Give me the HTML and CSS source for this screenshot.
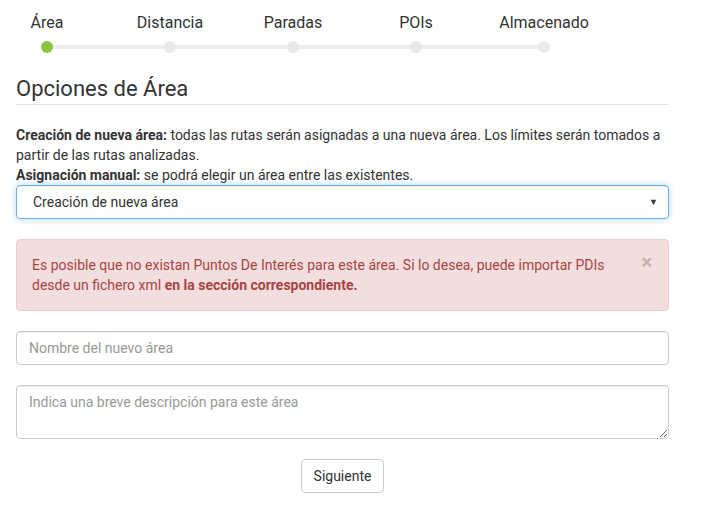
FILE: index.html
```html
<!DOCTYPE html>
<html lang="es">
<head>
<meta charset="utf-8">
<link rel="stylesheet" href="styles.css">
</head>
<body>
<div class="page">
  <div class="stepper">
    <div class="step active"><span class="step-label">Área</span><span class="dot"></span></div>
    <div class="step"><span class="step-label">Distancia</span><span class="dot"></span></div>
    <div class="step"><span class="step-label">Paradas</span><span class="dot"></span></div>
    <div class="step"><span class="step-label">POIs</span><span class="dot"></span></div>
    <div class="step last"><span class="step-label">Almacenado</span><span class="dot ring"></span></div>
  </div>

  <h2 class="title">Opciones de Área</h2>

  <p class="info"><strong>Creación de nueva área:</strong> todas las rutas serán asignadas a una nueva área. Los límites serán tomados a partir de las rutas analizadas.<br><strong>Asignación manual:</strong> se podrá elegir un área entre las existentes.</p>

  <div class="select">
    <span>Creación de nueva área</span>
    <span class="caret">▼</span>
  </div>

  <div class="alert">
    <p>Es posible que no existan Puntos De Interés para este área. Si lo desea, puede importar PDIs desde un fichero xml <strong>en la sección correspondiente.</strong></p>
    <span class="close">×</span>
  </div>

  <input class="field" type="text" placeholder="Nombre del nuevo área">

  <textarea class="field area" placeholder="Indica una breve descripción para este área"></textarea>

  <div class="actions">
    <button class="btn" type="button">Siguiente</button>
  </div>
</div>
</body>
</html>
```
FILE: styles.css
```css
* { box-sizing: border-box; }
body {
  margin: 0;
  font-family: Roboto, "Liberation Sans", sans-serif;
  font-size: 14px;
  color: #333;
  background: #fff;
}
.page {
  width: 653px;
  margin-left: 16px;
  display: flex;
  flex-direction: column;
}
.stepper {
  position: relative;
  display: flex;
  gap: 61px;
  padding-top: 13px;
}
.stepper::before {
  content: "";
  position: absolute;
  left: 31px;
  width: 491px;
  top: 45px;
  height: 4px;
  background: #eeeeee;
}
.step {
  width: 62px;
  display: flex;
  flex-direction: column;
  align-items: center;
  position: relative;
}
.step.last { margin-left: 5px; }
.step-label {
  font-size: 16px;
  line-height: 20px;
  white-space: nowrap;
  color: #333;
}
.dot {
  margin-top: 8px;
  width: 12px;
  height: 12px;
  border-radius: 50%;
  background: #e8e8e8;
  position: relative;
}
.step.active .dot { background: #8cc63f; }
.dot.ring { background: #e6e6e6; box-shadow: inset 0 0 0 2px #eeeeee; }
.dot.ring::after {
  content: "";
  position: absolute;
  left: 3px; top: 3px;
  width: 6px; height: 6px;
  border-radius: 50%;
  background: #ececec;
}
.title {
  margin: 22px 0 0;
  font-size: 22px;
  font-weight: 400;
  line-height: 28px;
  padding-bottom: 1px;
  border-bottom: 1px solid #e5e5e5;
}
.info {
  margin: 20px 0 0;
  line-height: 20px;
}
.select {
  margin-top: 0;
  height: 34px;
  border: 1px solid #66afe9;
  border-radius: 4px;
  box-shadow: inset 0 1px 1px rgba(0,0,0,.075), 0 0 6px rgba(102,175,233,.5);
  display: flex;
  align-items: center;
  justify-content: space-between;
  padding: 0 10px 0 16px;
  font-size: 14px;
  color: #333;
}
.caret { font-size: 9px; color: #333; }
.alert {
  margin-top: 20px;
  background: #f2dede;
  border: 1px solid #ebccd1;
  border-radius: 4px;
  color: #a94442;
  padding: 15px 35px 15px 15px;
  position: relative;
}
.alert p { margin: 0; line-height: 20px; }
.close {
  position: absolute;
  right: 16px;
  top: 12px;
  font-size: 20px;
  font-weight: 700;
  color: #000;
  opacity: .2;
  line-height: 20px;
}
.field {
  margin-top: 20px;
  display: block;
  width: 100%;
  height: 34px;
  border: 1px solid #ccc;
  border-radius: 4px;
  padding: 6px 12px;
  font-family: inherit;
  font-size: 14px;
  color: #555;
  box-shadow: inset 0 1px 1px rgba(0,0,0,.075);
}
.field::placeholder { color: #999; }
.field.area {
  height: 54px;
  resize: vertical;
  line-height: 20px;
}
.actions {
  margin-top: 20px;
  display: flex;
  justify-content: center;
}
.btn {
  height: 34px;
  padding: 6px 12px;
  font-family: inherit;
  font-size: 14px;
  color: #333;
  background: #fff;
  border: 1px solid #ccc;
  border-radius: 4px;
}
```
